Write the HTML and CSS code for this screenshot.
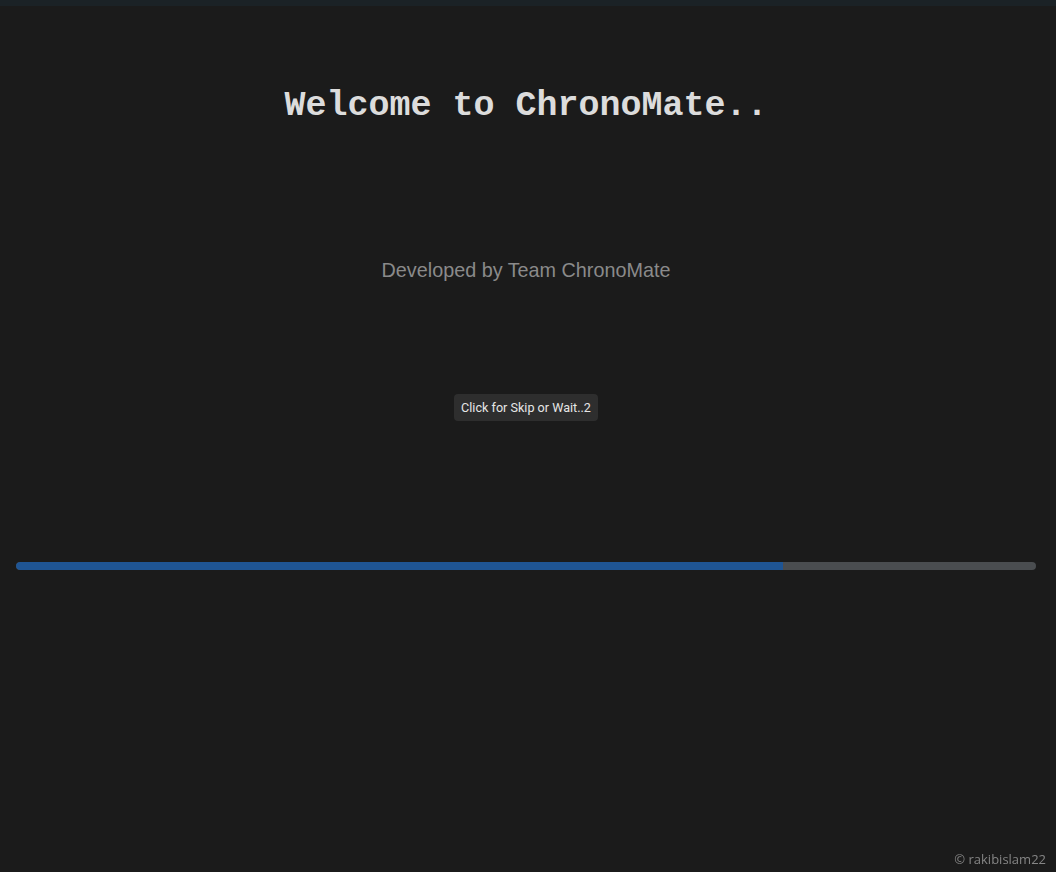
FILE: index.html
```html
<!DOCTYPE html>
<html>
<head>
<meta charset="utf-8">
<link rel="stylesheet" href="styles.css">
</head>
<body>
<div class="topbar"></div>
<main class="splash">
  <h1 class="title">Welcome to ChronoMate..</h1>
  <p class="credit">Developed by Team ChronoMate</p>
  <button class="skip">Click for Skip or Wait..2</button>
  <div class="progress"><div class="fill" style="width:75.2%"></div></div>
</main>
<footer class="copy">© rakibislam22</footer>
</body>
</html>
```
FILE: styles.css
```css
html, body {
  margin: 0;
  padding: 0;
  height: 100%;
  background: #1b1b1b;
}
body {
  display: flex;
  flex-direction: column;
  overflow: hidden;
}
.topbar {
  height: 6px;
  background: #1b2226;
  flex: none;
}
.splash {
  flex: 1;
  display: flex;
  flex-direction: column;
  align-items: center;
  padding: 0 20px 0 16px;
}
.title {
  margin: 80px 0 0;
  font-family: "Liberation Mono", "Courier New", monospace;
  font-weight: bold;
  font-size: 35px;
  line-height: 40px;
  color: #dcdcdc;
}
.credit {
  margin: 132px 0 0;
  font-family: "Liberation Sans", Arial, sans-serif;
  font-size: 19.8px;
  line-height: 24px;
  color: #8a8a8a;
}
.skip {
  margin-top: 112px;
  height: 27px;
  padding: 0 7px;
  border: none;
  border-radius: 4px;
  background: #2e2e2e;
  color: #e6e6e6;
  font-family: Roboto, sans-serif;
  font-size: 12.6px;
}
.progress {
  align-self: stretch;
  margin-top: 141px;
  height: 8px;
  border-radius: 4px;
  background: #4a4d50;
  overflow: hidden;
}
.fill {
  height: 100%;
  background: #1f5594;
  border-radius: 4px 0 0 4px;
}
.copy {
  position: fixed;
  right: 10px;
  bottom: 4px;
  font-family: "Open Sans", sans-serif;
  font-size: 13px;
  color: #858585;
}
```
